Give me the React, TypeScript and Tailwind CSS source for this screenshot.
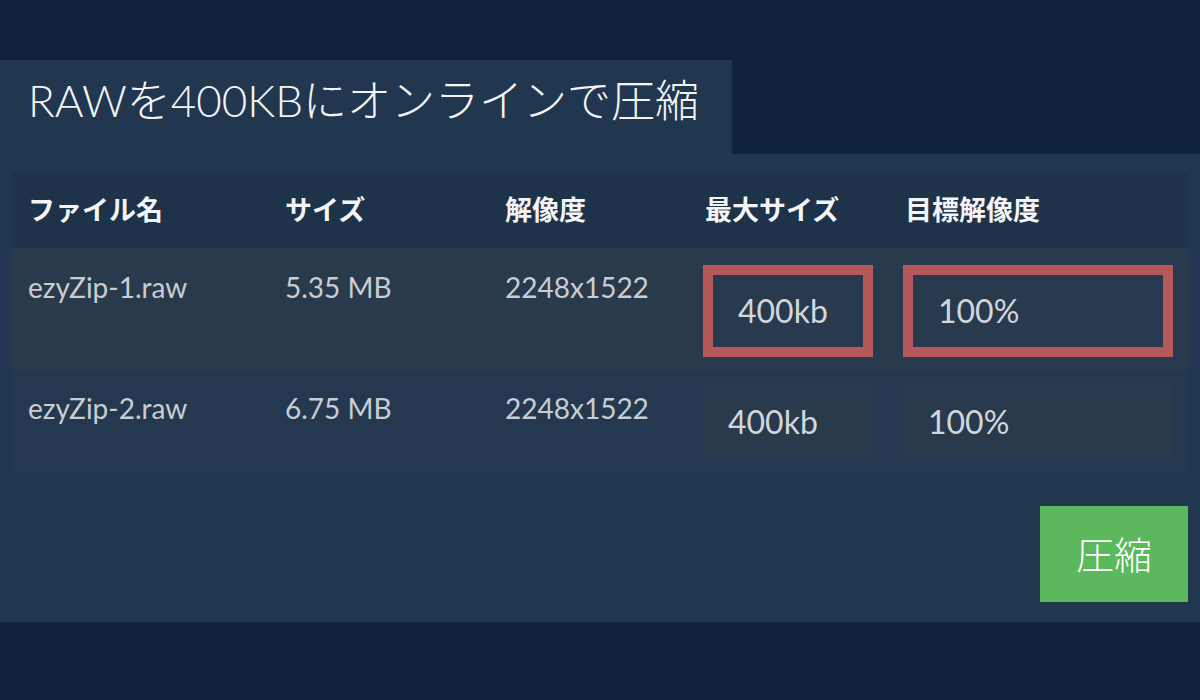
const headers = ["ファイル名", "サイズ", "解像度", "最大サイズ", "目標解像度"];

const files = [
  { name: "ezyZip-1.raw", size: "5.35 MB", res: "2248x1522", max: "400kb", target: "100%", active: true },
  { name: "ezyZip-2.raw", size: "6.75 MB", res: "2248x1522", max: "400kb", target: "100%", active: false },
];

const cols = "grid grid-cols-[257px_220px_200px_200px_1fr]";

export default function App() {
  return (
    <div
      className="min-h-[700px] bg-[#0f233a] pt-[60px]"
      style={{ fontFamily: "Lato, 'Noto Sans CJK JP', sans-serif" }}
    >
      <div className="w-[732px] h-[94px] bg-[#21364f] pl-[28px] pt-[15px]">
        <h1 className="text-[44px] leading-[50px] font-light text-[#f2f4f5]">
          RAWを400KBにオンラインで圧縮
        </h1>
      </div>

      <div className="bg-[#21364f] px-[12px] pt-[19px] pb-[20px]">
        <div>
          <div className={`${cols} h-[75px] items-center bg-[#1e3249]`}>
            {headers.map((h) => (
              <div key={h} className="pl-[16px] text-[27px] font-bold text-[#f3f4f5]">
                {h}
              </div>
            ))}
          </div>

          {files.map((f) => (
            <div
              key={f.name}
              className={`${cols} ${f.active ? "h-[124px] bg-[#2a3a4d]" : "h-[101px] bg-[#243950]"}`}
            >
              {[f.name, f.size, f.res].map((t, i) => (
                <div
                  key={i}
                  className={`pl-[16px] text-[28px] leading-[32px] text-[#c9cdd2] ${
                    f.active ? "pt-[23px]" : "pt-[20px]"
                  }`}
                >
                  {t}
                </div>
              ))}
              <div className={`pl-[14px] ${f.active ? "pt-[17px]" : "pt-[13px]"}`}>
                {f.active ? (
                  <div className="w-[170px] h-[92px] border-[10px] border-[#b6575b] bg-[#283a4d] pl-[25px] flex items-center text-[32px] text-[#d3d7dc]">
                    {f.max}
                  </div>
                ) : (
                  <div className="w-[170px] h-[73px] bg-[#283a4c] pl-[25px] flex items-center text-[32px] text-[#d3d7dc]">
                    {f.max}
                  </div>
                )}
              </div>
              <div className={`pl-[14px] pr-[15px] ${f.active ? "pt-[17px]" : "pt-[13px]"}`}>
                {f.active ? (
                  <div className="w-[270px] h-[92px] border-[10px] border-[#b6575b] bg-[#283a4d] pl-[25px] flex items-center text-[32px] text-[#d3d7dc]">
                    {f.target}
                  </div>
                ) : (
                  <div className="w-[270px] h-[73px] bg-[#283a4c] pl-[25px] flex items-center text-[32px] text-[#d3d7dc]">
                    {f.target}
                  </div>
                )}
              </div>
            </div>
          ))}
        </div>

        <div className="flex justify-end mt-[33px]">
          <button className="w-[148px] h-[96px] bg-[#5cb85c] text-white text-[38px] font-light flex items-center justify-center">
            圧縮
          </button>
        </div>
      </div>
    </div>
  );
}
